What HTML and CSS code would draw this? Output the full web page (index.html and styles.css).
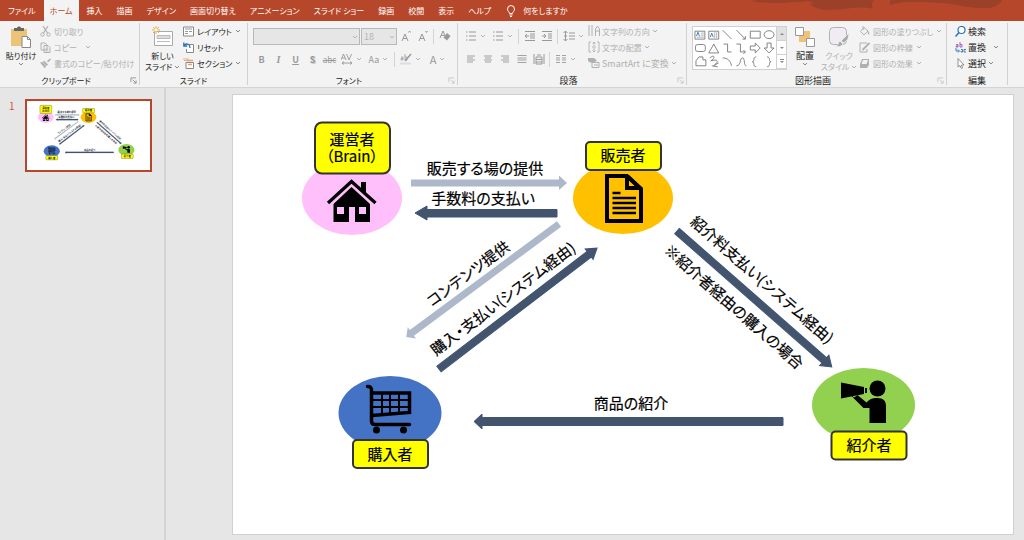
FILE: index.html
```html
<!DOCTYPE html>
<html lang="ja">
<head>
<meta charset="utf-8">
<title>プレゼンテーション</title>
<link rel="stylesheet" href="styles.css">
</head>
<body>
<svg class="defs" aria-hidden="true">
  <symbol id="chev" viewBox="0 0 6 6"><path d="M1 2l2 2 2-2" fill="none" stroke="currentColor"/></symbol>
  <symbol id="launch" viewBox="0 0 8 8"><path d="M1 6V1h6M3 3l4 4M7 4v3H4" fill="none" stroke="currentColor" stroke-width=".8"/></symbol>
  <symbol id="lines-l" viewBox="0 0 12 12"><path d="M2 3h8M2 5h6M2 7h8M2 9h6" stroke="currentColor" stroke-width=".9"/></symbol>
  <symbol id="lines-c" viewBox="0 0 12 12"><path d="M2 3h8M3 5h6M2 7h8M3 9h6" stroke="currentColor" stroke-width=".9"/></symbol>
  <symbol id="lines-r" viewBox="0 0 12 12"><path d="M2 3h8M4 5h6M2 7h8M4 9h6" stroke="currentColor" stroke-width=".9"/></symbol>
  <symbol id="lines-j" viewBox="0 0 12 12"><path d="M1.500 2.500h9M1.500 5h9M1.500 7h9M1.500 9.500h9" stroke="currentColor" stroke-width=".9"/></symbol>
  <symbol id="bullets" viewBox="0 0 12 12"><path d="M1 2h1.500M1 6h1.500M1 10h1.500M4 2h7M4 6h7M4 10h7" stroke="currentColor"/></symbol>
  <symbol id="indent-out" viewBox="0 0 12 12"><path d="M1 1.500h10M6 4h5M6 6h5M6 8h5M1 10.500h10M5 6H1M3 4L1 6l2 2" fill="none" stroke="currentColor"/></symbol>
  <symbol id="indent-in" viewBox="0 0 12 12"><path d="M1 1.500h10M7 4h4M7 6h4M7 8h4M1 10.500h10M1 6h4M3 4l2 2-2 2" fill="none" stroke="currentColor"/></symbol>
</svg>

<header class="tabbar">
  <nav class="tabs">
    <a href="#" class="tab tab-file">ファイル</a>
    <a href="#" class="tab tab-active">ホーム</a>
    <a href="#" class="tab">挿入</a>
    <a href="#" class="tab">描画</a>
    <a href="#" class="tab">デザイン</a>
    <a href="#" class="tab">画面切り替え</a>
    <a href="#" class="tab">アニメーション</a>
    <a href="#" class="tab">スライド ショー</a>
    <a href="#" class="tab">録画</a>
    <a href="#" class="tab">校閲</a>
    <a href="#" class="tab">表示</a>
    <a href="#" class="tab">ヘルプ</a>
    <a href="#" class="tab tab-tell"><svg class="i12" viewBox="0 0 12 12"><path d="M4.500 8.500C4.500 7 2.500 6.500 2.500 4a3.500 3.500 0 017 0c0 2.500-2 3-2 4.500zM4.500 10h3M5 11.500h2" fill="none" stroke="currentColor"/></svg>何をしますか</a>
  </nav>
  <svg class="swash" viewBox="0 0 280 21" preserveAspectRatio="none" aria-hidden="true"><path d="M6 1l8-1h116c-2 3-3 5-1 9-9-3-20-1-30 0-14 1-26 2-33-5l3-1c-4-3-8-1-14-1-18 1-32 2-49-1zM146 0h112c-3 6-10 9-22 8-14 0-26-5-40-5-18-1-36-3-50 2z"/></svg>
</header>

<section class="ribbon">
  <div class="group">
    <div class="body clip">
      <button class="big"><svg class="i22" viewBox="0 0 22 22"><path d="M1 3h16v17H1z" fill="#edc477"/><path d="M4 2h3c0-2 4-2 4 0h3v3H4z" fill="#666"/><path d="M12 10.500h5.500l3 3v8H12z" fill="#fff" stroke="#888"/><path d="M17.500 10.500v3h3" fill="none" stroke="#888"/></svg><span>貼り付け</span><svg class="chev"><use href="#chev"/></svg></button>
      <div class="stack">
        <button class="row off"><svg class="i11" viewBox="0 0 11 11"><path d="M3 0l4.500 7M8 0L3.500 7" stroke="currentColor" stroke-width="1.200"/><g fill="none" stroke="currentColor"><circle cx="2.500" cy="8.500" r="1.700"/><circle cx="8.500" cy="8.500" r="1.700"/></g></svg>切り取り</button>
        <button class="row off"><svg class="i11" viewBox="0 0 11 11"><path d="M1 1h4l2 2v5H1zM4 3.500h4l2 2v5H4z" fill="#f3f3f3" stroke="currentColor"/><path d="M5.500 7h3M5.500 9h3" stroke="currentColor" stroke-width=".7"/></svg>コピー<svg class="chev far"><use href="#chev"/></svg></button>
        <button class="row off"><svg class="i11" viewBox="0 0 11 11"><path d="M7 3l3-2.500 1 1L8 4.500zM4 2.500L8 6.500 6.500 8 3 4zM0 4.500l2.500-.5L6 8l-1 2.500z" fill="currentColor"/></svg>書式のコピー/貼り付け</button>
      </div>
    </div>
    <div class="caption kana"><span>クリップボード</span><svg class="launch"><use href="#launch"/></svg></div>
  </div>

  <div class="group">
    <div class="body slides">
      <button class="big"><svg class="i22" viewBox="0 0 22 22"><path d="M2.500 5.500h18v14h-18z" fill="#fff" stroke="#aaa"/><path d="M5 9.500h13v3H5zM5 15.500h13" fill="#ddd" stroke="#bbb"/><path d="M4 0v8M0 4h8M1 1l6 6M7 1L1 7" stroke="#e5ad57"/><circle cx="4" cy="4" r="1.500" fill="#fff3d8"/></svg><span>新しい</span><span>スライド <svg class="chev"><use href="#chev"/></svg></span></button>
      <div class="stack">
        <button class="row"><svg class="i11" viewBox="0 0 11 11"><path d="M.5 1h10v9H.5z" fill="#fff" stroke="#888"/><path d="M2 3h7M2 5.500h3M6 5.500h3M2 7.500h3" stroke="#999"/></svg>レイアウト<svg class="chev"><use href="#chev"/></svg></button>
        <button class="row"><svg class="i11" viewBox="0 0 11 11"><path d="M4 2.500h6.500v8h-7V7" fill="#fff" stroke="#888"/><path d="M7 6C7 2 4 1 1 3M.8.5V4h3.500" fill="none" stroke="#2b73b8" stroke-width="1.300"/></svg>リセット</button>
        <button class="row"><svg class="i11" viewBox="0 0 11 11"><path d="M0 1h6M1 2.500h5" stroke="#e8b080"/><path d="M3 4.500h7.500v6H3z" fill="#fff" stroke="#888"/><path d="M4 2.500h6M5 6.500h4" stroke="#e8a070" stroke-width="1.500"/></svg>セクション<svg class="chev"><use href="#chev"/></svg></button>
      </div>
    </div>
    <div class="caption kana"><span>スライド</span></div>
  </div>

  <div class="group">
    <div class="body two">
      <div class="line">
        <span class="pick pick-font"><select aria-label="フォント"><option></option></select><svg class="chev"><use href="#chev"/></svg></span>
        <span class="pick pick-size"><select aria-label="フォント サイズ"><option>18</option></select><svg class="chev"><use href="#chev"/></svg></span>
        <button class="tool" aria-label="フォント サイズの拡大"><svg class="i12" viewBox="0 0 12 12"><path d="M2 11l3-7 3 7M3 8.500h4M8.500 2.500l1-1.500 1 1.500" fill="none" stroke="currentColor"/></svg></button>
        <button class="tool" aria-label="フォント サイズの縮小"><svg class="i12" viewBox="0 0 12 12"><path d="M2 11l3-7 3 7M3 8.500h4M8.500 1l1 1.500 1-1.500" fill="none" stroke="currentColor"/></svg></button>
        <i class="sep"></i>
        <button class="tool" aria-label="書式のクリア"><svg class="i12" viewBox="0 0 12 12"><path d="M1 8l3-7 2 5M2 5.500h3" fill="none" stroke="currentColor"/><path d="M8 3l3.500 3L8 10.500 4.500 7.500z" fill="currentColor"/></svg></button>
      </div>
      <div class="line">
        <button class="tool b">B</button><button class="tool it">I</button><button class="tool b u">U</button><button class="tool b sh">S</button><button class="tool st">abc</button>
        <button class="tool split"><svg class="i12" viewBox="0 0 12 12"><path d="M0 7l2.500-6L5 7M1 5h3M5.500 1L8 7l2.500-6M1 10h10M3 8.500L1 10l2 1.500M9 8.500l2 1.500-2 1.500" fill="none" stroke="currentColor" stroke-width=".9"/></svg><svg class="chev"><use href="#chev"/></svg></button>
        <button class="tool split">Aa<svg class="chev"><use href="#chev"/></svg></button>
        <i class="sep"></i>
        <button class="tool split"><svg class="i12" viewBox="0 0 12 12"><path d="M0 10.500h11" stroke="#e3d8e6" stroke-width="2"/><path d="M11 1L5 8" stroke="currentColor" stroke-width="1.500"/><path d="M1 4h2v3H1V5.500h2M5 1v6h2V4H5" fill="none" stroke="currentColor" stroke-width=".8"/></svg><svg class="chev"><use href="#chev"/></svg></button>
        <button class="tool split big-a">A<svg class="chev"><use href="#chev"/></svg></button>
      </div>
    </div>
    <div class="caption kana"><span>フォント</span><svg class="launch off"><use href="#launch"/></svg></div>
  </div>

  <div class="group">
    <div class="body para">
      <div class="two">
        <div class="line">
          <button class="tool split" aria-label="箇条書き"><svg class="i12"><use href="#bullets"/></svg><svg class="chev"><use href="#chev"/></svg></button>
          <button class="tool split" aria-label="段落番号"><svg class="i12"><use href="#bullets"/></svg><svg class="chev"><use href="#chev"/></svg></button>
          <i class="sep"></i>
          <button class="tool" aria-label="インデントを減らす"><svg class="i12"><use href="#indent-out"/></svg></button>
          <button class="tool" aria-label="インデントを増やす"><svg class="i12"><use href="#indent-in"/></svg></button>
          <i class="sep"></i>
          <button class="tool split" aria-label="行間"><svg class="i12" viewBox="0 0 12 12"><path d="M6 3h6M6 6h6M6 9h6M2.500 1v10M.5 3l2-2 2 2M.5 9l2 2 2-2M1 6h3" fill="none" stroke="currentColor"/></svg><svg class="chev"><use href="#chev"/></svg></button>
        </div>
        <div class="line">
          <button class="tool" aria-label="左揃え"><svg class="i12"><use href="#lines-l"/></svg></button>
          <button class="tool" aria-label="中央揃え"><svg class="i12"><use href="#lines-c"/></svg></button>
          <button class="tool" aria-label="右揃え"><svg class="i12"><use href="#lines-r"/></svg></button>
          <button class="tool" aria-label="両端揃え"><svg class="i12"><use href="#lines-j"/></svg></button>
          <button class="tool" aria-label="均等割り付け"><svg class="i12" viewBox="0 0 12 12"><path d="M1 1v10M11 1v10M3 4h6v7H3zM3 6.500h6M3 9h6M4 2h4" fill="none" stroke="currentColor"/></svg></button>
          <i class="sep"></i>
          <button class="tool split" aria-label="段組み"><svg class="i12" viewBox="0 0 12 12"><path d="M1 2.500h4M1 5h4M1 7h4M1 9.500h4M7 2.500h4M7 5h4M7 7h4M7 9.500h4" stroke="currentColor" stroke-width=".9"/></svg><svg class="chev"><use href="#chev"/></svg></button>
        </div>
      </div>
      <div class="stack">
        <button class="row off"><svg class="i12" viewBox="0 0 12 12"><path d="M1 0v11M4 0v11M7.500 11V4l2-3 2 3v7M7.500 6h4" fill="none" stroke="currentColor"/></svg>文字列の方向<svg class="chev"><use href="#chev"/></svg></button>
        <button class="row off"><svg class="i12" viewBox="0 0 12 12"><path d="M3 1H1v10h2M9 1h2v10H9M6 1v4M6 7v4M4.500 2.500L6 1l1.500 1.500M4.500 9.500L6 11l1.500-1.500M4 6h4" fill="none" stroke="currentColor" stroke-width=".9"/></svg>文字の配置<svg class="chev"><use href="#chev"/></svg></button>
        <button class="row off smart"><svg class="i12" viewBox="0 0 12 12"><path d="M0 1h6l3 2.500-3 2H2L0 4z" fill="currentColor"/><path d="M4 5.500h7v5H4zM6 8h4" fill="#f3f3f3" stroke="currentColor"/></svg>SmartArt に変換<svg class="chev"><use href="#chev"/></svg></button>
      </div>
    </div>
    <div class="caption"><span>段落</span><svg class="launch off"><use href="#launch"/></svg></div>
  </div>

  <div class="group">
    <div class="body draw">
      <div class="gallery">
        <svg class="shapes" viewBox="0 0 84 42" aria-label="図形"><g fill="none" stroke="#777" stroke-width=".9">
          <path d="M2 4h10v8H2zM16 4h10v8H16z"/><path d="M8 6h3M8 8h3M4 10h7M22 5v6M24 5v6" stroke="#aaa"/><path d="M3.500 9L5 5l1.500 4M17.500 10L19 6l1.500 4" stroke="#2b73b8"/>
          <path d="M30 3l9 9M44 3l9 9M53 9v3h-3M58 4h10v7H58z"/><ellipse cx="77" cy="7.500" rx="5" ry="4"/>
          <rect x="2.500" y="17.500" width="10" height="7" rx="2"/><path d="M21 17l5 9H16zM31 17h4v8h4M44 17h4v8h5M51 23l2 2-2 2M58 19h5v-3l5 5-5 5v-3h-5zM75 16h4v5h3l-5 5-5-5h3z"/>
          <path d="M3 39v-5l3-4h4v3h3v6zM17 31c5-4 6 0 1 3 7-2 9 0 3 5l5-3M19 39l6 1M30 31c5 0 8 3 9 8M44 39c5 0 3-8 6-8s1 8 4 8M64 30c-4 0-1 5-4 5 3 0 0 5 4 5M75 30c4 0 1 5 4 5-3 0 0 5-4 5"/></g></svg>
        <div class="scroll"><button aria-label="上へ"><svg viewBox="0 0 6 6"><path d="M1 4l2-2 2 2z"/></svg></button><button aria-label="下へ"><svg viewBox="0 0 6 6"><path d="M1 2l2 2 2-2z"/></svg></button><button aria-label="その他"><svg viewBox="0 0 6 6"><path d="M1 0h4v1H1zM1 2l2 2 2-2z"/></svg></button></div>
      </div>
      <button class="big arrange"><svg class="i22" viewBox="0 0 22 22"><path d="M5 5h11v11H5z" fill="#edc477"/><path d="M1.500 1.500h8v8h-8zM12.500 12.500h8v8h-8z" fill="#fff" stroke="#999"/></svg><span>配置</span><svg class="chev"><use href="#chev"/></svg></button>
      <button class="big quick off"><svg class="i22" viewBox="0 0 22 22"><rect x="1.500" y="1.500" width="17" height="17" rx="4" fill="#f1ecf3" stroke="currentColor"/><path d="M21 7l-1 6-4 4-3-2zM12 15l3 3c-2 3-5 3-7 2 3-1 2-4 4-5z" fill="#aaa" stroke="#f3f3f3" stroke-width=".7"/></svg><span>クイック</span><span>スタイル <svg class="chev"><use href="#chev"/></svg></span></button>
      <div class="stack">
        <button class="row off"><svg class="i11" viewBox="0 0 11 11"><path d="M5 1.500L9 5 5 9 1.500 5.500zM4 0v4" fill="none" stroke="currentColor"/><path d="M9 5c2 1 1 4 1 4S8 7 9 5z" fill="currentColor"/></svg>図形の塗りつぶし<svg class="chev"><use href="#chev"/></svg></button>
        <button class="row off"><svg class="i11" viewBox="0 0 11 11"><path d="M8 1H1v9h7V7" fill="none" stroke="currentColor"/><path d="M10.500 1L5 6.500 3.500 8" stroke="currentColor" stroke-width="1.800"/></svg>図形の枠線<svg class="chev"><use href="#chev"/></svg></button>
        <button class="row off"><svg class="i11" viewBox="0 0 11 11"><path d="M3 1h7v6L8 10H1V6z" fill="currentColor"/><path d="M4 2h5L7.500 6h-5z" fill="#f3f3f3"/></svg>図形の効果<svg class="chev"><use href="#chev"/></svg></button>
      </div>
    </div>
    <div class="caption"><span>図形描画</span><svg class="launch off"><use href="#launch"/></svg></div>
  </div>

  <div class="group">
    <div class="body edit">
      <div class="stack">
        <button class="row"><svg class="i11" viewBox="0 0 11 11"><circle cx="6.500" cy="4" r="3.500" fill="#fff" stroke="#2b73b8" stroke-width="1.200"/><path d="M4 6.500L.5 10.500" stroke="#2b73b8" stroke-width="1.500"/></svg>検索</button>
        <button class="row"><svg class="i11" viewBox="0 0 11 11"><path d="M1 2.500h2V5H1V4h2M5 0v5h2V2.500H5" fill="none" stroke="#9b59b6" stroke-width=".9"/><path d="M1 6v3h3M3 7.500L4.500 9 3 10.500M6 7.500h1.500V10H6V9M11 7.500H9V10h2" fill="none" stroke="#2b73b8" stroke-width=".9"/></svg>置換<svg class="chev far"><use href="#chev"/></svg></button>
        <button class="row"><svg class="i11" viewBox="0 0 11 11"><path d="M3 .5V9l2-1.500L6.500 10.500l1-.5L6.500 7H9z" fill="#fff" stroke="#777" stroke-width=".8"/></svg>選択<svg class="chev"><use href="#chev"/></svg></button>
      </div>
    </div>
    <div class="caption"><span>編集</span></div>
  </div>
</section>

<main class="work">
  <aside class="thumbs">
    <span class="num">1</span>
    <a href="#" class="thumb" aria-label="スライド 1"><svg viewBox="233 95 780 439"><use href="#diagram"/></svg></a>
  </aside>
  <section class="stage">
    <svg class="slide" viewBox="233 95 780 439">
      <g id="diagram">
        <g class="dark">
          <path d="M557 209.500H427V206L415 213l12 7V217H557z"/>
          <path d="M0-3.500H189V-6.500L199 0 189 6.500V3.500H0z" transform="translate(439 369) rotate(-37.400)"/>
          <path d="M0-3.500H196V-7L206 0 196 7V3.500H0z" transform="translate(677 231) rotate(41.300)"/>
          <path d="M783 417.500H482V414L474 421.500 482 429V425.500H783z"/>
        </g>
        <g class="pale">
          <path d="M411 179.500H559V175.500L567 183 559 190V186.500H411z"/>
          <path d="M0-3.500H183V-7L190 0 183 7V3.500H0z" transform="translate(559 224) rotate(143.500)"/>
        </g>
        <ellipse cx="352" cy="198" rx="50" ry="37" fill="#ffbffa"/>
        <ellipse cx="623" cy="198" rx="50" ry="36" fill="#ffc000"/>
        <ellipse cx="390" cy="413" rx="51.500" ry="37" fill="#4472c4"/>
        <ellipse cx="863.500" cy="405" rx="51.500" ry="37" fill="#92d050"/>

        <path d="M351.500 187L370 204v18h-15v-15h-6v15h-15.500v-18zM361 182h5v12l-5-5z"/>
        <path d="M328 203L351.500 181.500 375.500 203" fill="none" stroke="#000" stroke-width="3.200"/>
        <path d="M337 207h7v7h-7zM359 207h7v7h-7z" fill="#ffbffa"/>

        <path d="M607 176h20l14 13v32h-34z" fill="none" stroke="#000" stroke-width="4"/>
        <path d="M625 175h4l14 13v2h-18zM629 180v6h6z" fill-rule="evenodd"/>
        <path d="M612.500 193h8M612.500 198h23.500M612.500 203h23.500M612.500 208h23.500M612.500 213h23.500" stroke="#000" stroke-width="2.300"/>

        <path d="M367.500 386.500c3 0 4 1 4 4V421q0 3.500 3.500 3.500h34.500" fill="none" stroke="#000" stroke-width="3.500" stroke-linecap="round"/>
        <path d="M372 393h37.500v19.500L372 415.500" fill="none" stroke="#000" stroke-width="3.500"/>
        <path d="M382 393v22M390 393v21M399 393v20M372 400h38M372 407h38" stroke="#000" stroke-width="2" fill="none"/>
        <circle cx="376.500" cy="430" r="3.500"/><circle cx="403.500" cy="430" r="3.500"/>

        <circle cx="877.500" cy="388.500" r="8"/>
        <path d="M841 382.500l23 4.500v7l-23 4.500zM865 388h2v5h-2z"/>
        <path d="M869.500 423v-15h-6l-10-10 4-3 9 7.500c4-4.500 8-4.500 11-4.500 6 0 8.500 3 8.500 8v17z"/>
        <path d="M852 396c2 3 5 2 6 0" fill="none" stroke="#000"/>

        <g class="tag">
          <rect x="315" y="122.500" width="75" height="51" rx="7"/>
          <rect x="586" y="142" width="75" height="28" rx="4"/>
          <rect x="353" y="440" width="75" height="28" rx="4"/>
          <rect x="831.500" y="431.500" width="75" height="28" rx="4"/>
        </g>
        <g class="label">
          <text x="352" y="145">運営者</text>
          <text x="352" y="162">（Brain）</text>
          <text x="623" y="161">販売者</text>
          <text x="390" y="460">購入者</text>
          <text x="869" y="451">紹介者</text>
          <text x="485" y="174">販売する場の提供</text>
          <text x="483" y="204">手数料の支払い</text>
          <text x="631" y="409">商品の紹介</text>
          <text transform="translate(469 275) rotate(-36.400)" y="4">コンテンツ提供</text>
          <text transform="translate(504 300) rotate(-37)" y="4">購入・支払い(システム経由)</text>
          <text transform="translate(761 281) rotate(41.300)" y="4">紹介料支払い(システム経由)</text>
          <text transform="translate(733 308) rotate(41.300)" y="4">※紹介者経由の購入の場合</text>
        </g>
      </g>
    </svg>
  </section>
</main>
</body>
</html>
```
FILE: styles.css
```css
* { box-sizing: border-box; }
body {
  margin: 0;
  min-height: 100vh;
  display: flex;
  flex-direction: column;
  background: #e6e6e6;
  color: #222;
  font: 9px/11px "Noto Sans CJK JP", sans-serif;
  font-feature-settings: "palt";
  white-space: nowrap;
}
.defs { position: absolute; width: 0; height: 0; }
button, select { font: inherit; font-feature-settings: inherit; color: inherit; border: 0; background: none; padding: 0; margin: 0; }
a { color: inherit; text-decoration: none; }
svg { flex: none; }
.i11 { width: 11px; height: 11px; }
.i12 { width: 12px; height: 12px; }
.i22 { width: 22px; height: 22px; }
.chev { width: 6px; height: 6px; color: #888; }
.off, .off .chev { color: #b0b0b0; }

.tabbar { display: flex; justify-content: space-between; height: 21px; background: #b7472a; color: #fff; font-size: 8px; }
.tabs { display: flex; }
.tab { display: flex; align-items: center; padding: 0 7px; }
.tab-file { padding: 0 8px; }
.tab-active { background: #f3f3f3; color: #b7472a; padding: 0 6px; margin-right: 1px; }
.tab-tell { gap: 6px; }
.swash { width: 280px; height: 21px; fill: #9b4029; }

.ribbon {
  display: grid;
  grid-template-columns: 140px 108px 210px 229px 260px 61px;
  height: 67px;
  padding-top: 2px;
  background: #f3f3f3;
  border-bottom: 1px solid #d4d4d4;
}
.group { display: flex; flex-direction: column; border-right: 1px solid #d0d0d0; margin-bottom: 2px; }
.body { display: flex; flex: 1; padding: 0 0 0 5px; }
.caption { display: flex; align-items: center; height: 10px; padding: 0 2px; }
.caption span { flex: 1; text-align: center; }
.kana { font-size: 8px; }
.launch { width: 7px; height: 7px; color: #777; }
.launch.off { color: #bbb; }
.stack { display: flex; flex-direction: column; }
.row { display: flex; align-items: center; gap: 3px; height: 16px; font-size: 8px; }
.row .far { margin-left: 5px; }
.big { display: flex; flex-direction: column; align-items: center; width: 32px; padding-top: 3px; font-size: 8px; }
.big span { line-height: 11px; }
.big .i22 { margin-bottom: 2px; }
.clip, .slides { gap: 3px; }
.slides .big { width: 35px; }

.two { display: flex; flex-direction: column; gap: 5px; padding-top: 4px; }
.line { display: flex; align-items: center; height: 18px; color: #999; }
.tool { width: 17px; height: 16px; display: flex; align-items: center; justify-content: center; gap: 3px; }
.tool .chev { color: #b4b4b4; }
.split { width: 27px; }
.sep { width: 1px; height: 15px; background: #d4d4d4; margin: 0 2px; }
.b { font-weight: 700; }
.it { font-family: "Liberation Serif", serif; font-style: italic; font-weight: 700; font-size: 10px; }
.u { text-decoration: underline; }
.sh { text-shadow: 1px 1px #ccc; }
.st { font-size: 8px; text-decoration: line-through; }
.big-a { font-size: 11px; }
.pick { position: relative; height: 17px; }
.pick select { appearance: none; width: 100%; height: 17px; border: 1px solid #b8b8b8; background: #e6e6e6; padding: 0 2px; color: #b4b4b4; border-radius: 0; }
.pick .chev { position: absolute; right: 2px; top: 6px; color: #b4b4b4; }
.pick-font { width: 107px; margin-right: 1px; }
.pick-size { width: 36px; }

.body.para { justify-content: space-between; padding: 0 0 0 4px; }
.para .stack { width: 98px; }
.para .row { gap: 2px; }
.para .smart { font-size: 9px; }
.gallery { display: flex; width: 95px; height: 44px; margin-top: 3px; background: #fff; border: 1px solid #d0d0d0; }
.shapes { width: 83px; height: 42px; }
.scroll { display: flex; flex-direction: column; width: 10px; border-left: 1px solid #d0d0d0; }
.scroll button { flex: 1; display: flex; align-items: center; justify-content: center; border-bottom: 1px solid #d0d0d0; }
.scroll button:first-child { background: #e1e1e1; }
.scroll svg { width: 6px; height: 6px; fill: #888; }
.arrange { width: 36px; font-size: 9px; }
.quick { width: 32px; margin-right: 4px; }
.body.edit { padding-left: 8px; }
.edit .row { font-size: 9px; gap: 2px; }

.work { display: flex; flex: 1; }
.thumbs { display: flex; align-items: flex-start; gap: 11px; width: 166px; padding: 11px 12px 0 9px; border-right: 2px solid #d4d4d4; }
.num { width: 5px; margin-top: 1px; font-size: 10px; color: #d35230; }
.thumb { flex: 1; display: flex; border: 2px solid #b7472a; background: #fff; }
.thumb svg { flex: 1; width: 100%; }
.stage { flex: 1; padding: 7px 11px 5px 67px; }
.slide { display: block; width: 100%; background: #fff; outline: 1px solid #d0d0d0; }
.dark { fill: #44546a; stroke: #3b5580; stroke-width: 1px; }
.pale { fill: #adb9ca; }
.tag { fill: #ff0; stroke: #333; stroke-width: 2px; }
.label { font-size: 15px; fill: #000; stroke: #000; stroke-width: .2px; text-anchor: middle; }
```
